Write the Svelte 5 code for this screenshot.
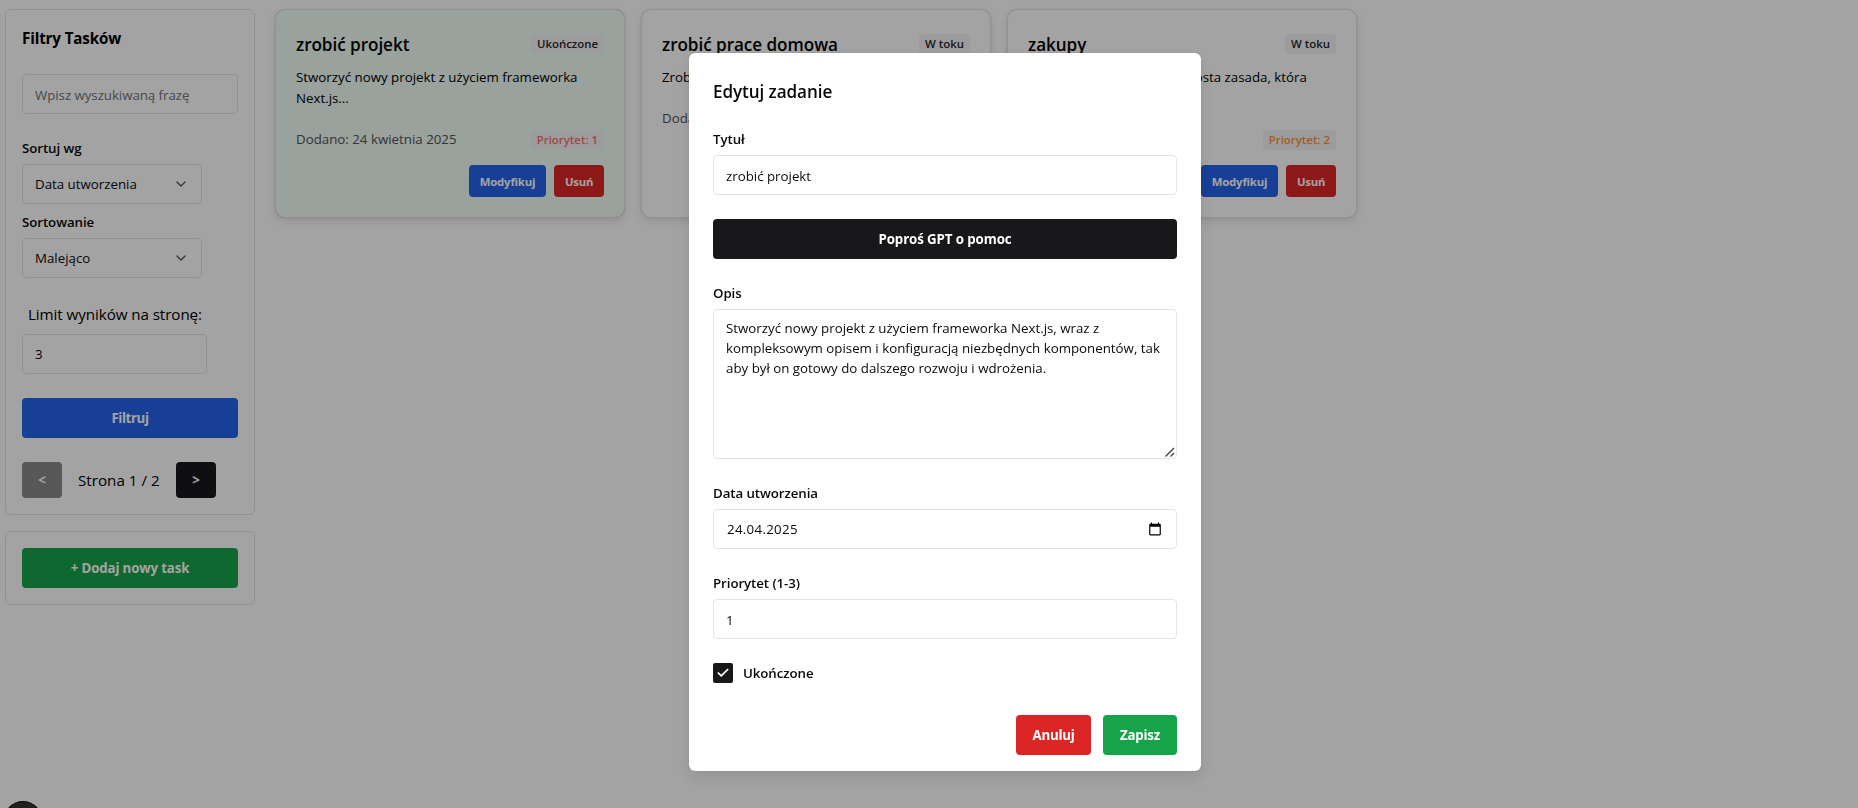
<script>
  const tasks = [
    {
      title: 'zrobić projekt',
      status: 'Ukończone',
      done: true,
      text: 'Stworzyć nowy projekt z użyciem frameworka Next.js...',
      date: '24 kwietnia 2025',
      priority: 1
    },
    {
      title: 'zrobić prace domowa',
      status: 'W toku',
      done: false,
      text: 'Zrobić',
      date: '24 kwietnia 2025',
      priority: 3
    },
    {
      title: 'zakupy',
      status: 'W toku',
      done: false,
      text: 'Zakupy na weekendy, to prosta zasada, która porządkuje...',
      date: '24 kwietnia 2025',
      priority: 2
    }
  ];

  let form = $state({
    title: 'zrobić projekt',
    description:
      'Stworzyć nowy projekt z użyciem frameworka Next.js, wraz z\nkompleksowym opisem i konfiguracją niezbędnych komponentów, tak\naby był on gotowy do dalszego rozwoju i wdrożenia.',
    date: '24.04.2025',
    priority: '1',
    done: true
  });
</script>

{#snippet chevron()}
  <svg class="chevron" viewBox="0 0 24 24" fill="none" stroke="currentColor" stroke-width="2" stroke-linecap="round" stroke-linejoin="round"><path d="m6 9 6 6 6-6" /></svg>
{/snippet}

<div class="page">
  <aside>
    <section class="panel">
      <h2>Filtry Tasków</h2>
      <input class="field search" placeholder="Wpisz wyszukiwaną frazę" />
      <div class="sorts">
        <div class="group">
          <span class="label">Sortuj wg</span>
          <button class="field select"><span>Data utworzenia</span>{@render chevron()}</button>
        </div>
        <div class="group">
          <span class="label">Sortowanie</span>
          <button class="field select"><span>Malejąco</span>{@render chevron()}</button>
        </div>
      </div>
      <div class="limit">
        <p>Limit wyników na stronę:</p>
        <input class="field" value="3" />
      </div>
      <button class="btn blue">Filtruj</button>
      <div class="pager">
        <button class="btn dark small off">&lt;</button>
        <span>Strona 1 / 2</span>
        <button class="btn dark small">&gt;</button>
      </div>
    </section>
    <section class="panel">
      <button class="btn green">+ Dodaj nowy task</button>
    </section>
  </aside>

  <main>
    {#each tasks as task}
      <article class:done={task.done}>
        <header>
          <h3>{task.title}</h3>
          <span class="badge">{task.status}</span>
        </header>
        <p class="text">{task.text}</p>
        <div class="meta">
          <span class="date">Dodano: {task.date}</span>
          <span class="badge prio p{task.priority}">Priorytet: {task.priority}</span>
        </div>
        <footer>
          <button class="btn xs blue">Modyfikuj</button>
          <button class="btn xs red">Usuń</button>
        </footer>
      </article>
    {/each}
  </main>
</div>

<div class="devtools"></div>

<div class="backdrop">
  <div class="dialog" role="dialog" aria-label="Edytuj zadanie">
    <h3>Edytuj zadanie</h3>
    <label class="group">
      <span class="label">Tytuł</span>
      <input class="field" bind:value={form.title} />
    </label>
    <button class="btn dark">Poproś GPT o pomoc</button>
    <label class="group area">
      <span class="label">Opis</span>
      <textarea class="field" spellcheck="false" bind:value={form.description}></textarea>
      <svg class="grip" viewBox="0 0 10 10" stroke="#3f3f46" stroke-width="1.4" fill="none"><path d="M0.500 9.500 9 1M5.500 9.500 9 6" /></svg>
    </label>
    <label class="group">
      <span class="label">Data utworzenia</span>
      <div class="field dated">
        <span>{form.date}</span>
        <svg viewBox="0 0 24 24" width="14" height="14"><path d="M20 3h-1V1h-2v2H7V1H5v2H4c-1.100 0-2 .9-2 2v16c0 1.100.9 2 2 2h16c1.100 0 2-.9 2-2V5c0-1.100-.9-2-2-2zm0 18H4V8h16v13z" /></svg>
      </div>
    </label>
    <label class="group">
      <span class="label">Priorytet (1-3)</span>
      <input class="field" bind:value={form.priority} />
    </label>
    <label class="check">
      <span class="box"><svg viewBox="0 0 24 24" width="14" height="14" fill="none" stroke="#fff" stroke-width="3" stroke-linecap="round" stroke-linejoin="round"><path d="M20 6 9 17l-5-5" /></svg></span>
      <span class="label">Ukończone</span>
    </label>
    <div class="actions">
      <button class="btn red">Anuluj</button>
      <button class="btn green">Zapisz</button>
    </div>
  </div>
</div>

<style>
  :global(body) {
    background: #fff;
    color: #000;
    font-family: 'Open Sans', 'Noto Sans', sans-serif;
    overflow: hidden;
  }
  * { box-sizing: border-box; }
  h2, h3, p { margin: 0; }
  button, input, textarea { font-family: inherit; margin: 0; outline: none; }

  .page { display: flex; align-items: flex-start; gap: 20px; padding: 9px 5px; height: 808px; }
  aside { display: flex; flex-direction: column; gap: 16px; width: 250px; }
  .panel {
    display: flex; flex-direction: column; gap: 24px;
    padding: 16px; border: 1px solid #e4e4e7; border-radius: 6px;
  }
  h2 { font-size: 15.2px; line-height: 24px; font-weight: 700; letter-spacing: -0.15px; }

  .field {
    display: block; width: 100%; height: 40px; padding: 0 12px;
    border: 1px solid #e4e4e7; border-radius: 4px; background: transparent;
    color: #09090b; font-size: 13.3px; line-height: 20px;
  }
  .search { padding-top: 2px; letter-spacing: -0.05px; }
  .field::placeholder { color: #71717a; opacity: 1; }
  .sorts { display: flex; flex-direction: column; gap: 8px; width: 180px; }
  .group { display: flex; flex-direction: column; gap: 6px; }
  .label { font-size: 13.3px; line-height: 20px; font-weight: 600; color: #09090b; letter-spacing: -0.08px; }
  .select { display: flex; align-items: center; justify-content: space-between; text-align: left; }
  .chevron { width: 16px; height: 16px; color: #52525b; }
  .limit { display: flex; flex-direction: column; gap: 8px; }
  .limit p { padding-left: 6px; font-size: 15.2px; line-height: 24px; letter-spacing: -0.08px; }
  .limit .field { width: 185px; }

  .btn {
    display: flex; align-items: center; justify-content: center;
    height: 40px; padding: 0 16px; border: 0; border-radius: 4px;
    color: #fff; font-size: 13.3px; line-height: 20px; font-weight: 700; letter-spacing: -0.1px;
  }
  .blue { background: #2563eb; }
  .green { background: #16a34a; }
  .red { background: #dc2626; }
  .dark { background: #18181b; }
  .small { width: 40px; height: 36px; padding: 0; }
  .off { opacity: 0.5; }
  .panel .green { letter-spacing: -0.15px; }
  .panel .blue { letter-spacing: -0.4px; }
  .pager { display: flex; align-items: center; gap: 16px; font-size: 15.2px; line-height: 24px; }
  .pager span { width: 82px; white-space: nowrap; }

  main { display: flex; gap: 16px; }
  article {
    display: flex; flex-direction: column; width: 350px; height: 209px; padding: 20px;
    border: 1px solid #e4e4e7; border-radius: 10px;
    box-shadow: 0 4px 8px rgba(24, 24, 27, 0.1), 0 0 1px rgba(24, 24, 27, 0.3);
  }
  article.done { background: #f0fdf4; }
  header, .meta { display: flex; align-items: center; justify-content: space-between; }
  h3 { height: 28px; padding-top: 1px; font-size: 17.1px; line-height: 28px; font-weight: 600; letter-spacing: -0.04px; }
  .badge {
    height: 20px; padding: 0 6px; border-radius: 4px; background: #f4f4f5;
    color: #27272a; font-size: 11.4px; line-height: 20px; font-weight: 600;
  }
  .text { margin-top: 9px; font-size: 13.3px; line-height: 21px; }
  .meta { margin-top: 20px; height: 21px; }
  .date { color: #52525b; font-size: 13.3px; line-height: 21px; }
  .p1 { color: #f87171; }
  .p2 { color: #fb923c; }
  .p3 { color: #4ade80; }
  footer { display: flex; justify-content: flex-end; gap: 8px; margin-top: auto; }
  .xs { height: 32px; padding: 1px 0 0; width: 77px; font-size: 11.4px; letter-spacing: -0.25px; }
  .xs.blue { letter-spacing: -0.2px; }
  .xs.red { width: 50px; }

  .devtools {
    position: fixed; left: 5px; top: 802px; width: 36px; height: 36px;
    border-radius: 50%; background: #333; box-shadow: 0 0 0 1px #111;
  }

  .backdrop {
    position: fixed; inset: 0; display: flex; justify-content: center; align-items: flex-start;
    padding: 53px 0 0 32px; background: rgba(0, 0, 0, 0.36);
  }
  .dialog {
    display: flex; flex-direction: column; gap: 24px; width: 512px; height: 718px;
    padding: 24px 24px 16px; border-radius: 6px; background: #fff;
    box-shadow: 0 8px 16px rgba(24, 24, 27, 0.1), 0 0 1px rgba(24, 24, 27, 0.3);
  }
  .dialog h3 { color: #09090b; letter-spacing: -0.08px; }
  .dialog .field { padding-top: 2px; }
  .area { position: relative; }
  .dialog textarea.field { height: 150px; padding: 8px 12px; resize: none; white-space: pre; overflow: hidden; }
  .grip { position: absolute; right: 2px; bottom: 2px; width: 10px; height: 10px; }
  .dialog .dated { display: flex; align-items: center; justify-content: space-between; padding: 0 14px 0 13px; }
  .dated span { letter-spacing: 0.3px; }
  .check { display: flex; align-items: center; gap: 10px; }
  .box {
    display: flex; align-items: center; justify-content: center;
    width: 20px; height: 20px; border-radius: 2px; background: #18181b;
  }
  .actions { display: flex; justify-content: flex-end; gap: 12px; margin-top: 8px; }
  .actions .btn { width: 74px; padding: 0; letter-spacing: -0.25px; }
  .actions .red { width: 75px; }
</style>
